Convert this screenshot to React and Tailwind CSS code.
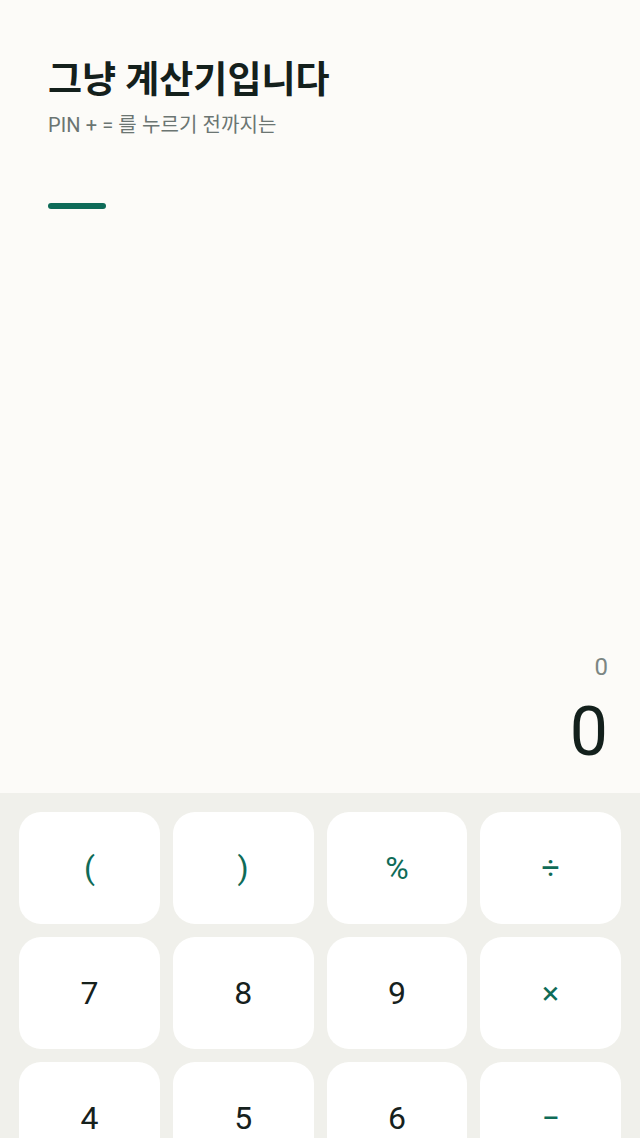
import React, { useState } from "react";

const keys = [
  { label: "(", op: true },
  { label: ")", op: true },
  { label: "%", op: true },
  { label: "÷", op: true },
  { label: "7" },
  { label: "8" },
  { label: "9" },
  { label: "×", op: true },
  { label: "4" },
  { label: "5" },
  { label: "6" },
  { label: "−", op: true },
  { label: "1" },
  { label: "2" },
  { label: "3" },
  { label: "+", op: true },
  { label: "C", op: true },
  { label: "0" },
  { label: "." },
  { label: "=", op: true },
];

export default function App() {
  const [expr, setExpr] = useState("0");
  const [result, setResult] = useState("0");

  const press = (k) => {
    if (k === "C") {
      setExpr("0");
      setResult("0");
      return;
    }
    setExpr((e) => (e === "0" ? k : e + k));
  };

  return (
    <div
      className="h-screen overflow-hidden bg-[#fcfbf8] flex flex-col"
      style={{ fontFamily: 'Roboto, "Noto Sans CJK KR", sans-serif' }}
    >
      <div className="h-[793px] shrink-0 flex flex-col px-12 pr-8">
        <h1 className="mt-[55px] text-[37px] leading-[52px] font-bold text-[#14201c]">
          그냥 계산기입니다
        </h1>
        <p className="mt-[4px] text-[20px] leading-[28px] text-[#6b7572] tracking-[0.005em]">
          PIN + = 를 누르기 전까지는
        </p>
        <div className="mt-[64px] w-[58px] h-[6px] rounded-full bg-[#0e6b58]" />

        <div className="flex-1" />
        <div className="text-right text-[24px] leading-[30px] text-[#7b8683]">{expr}</div>
        <div className="mt-[10px] mb-[21px] text-right text-[68px] leading-[80px] text-[#13201c]">
          {result}
        </div>
      </div>

      <div className="bg-[#f0f0eb] px-[19px] pt-[19px] grid grid-cols-4 gap-x-[13px] gap-y-[13px]">
        {keys.map((k) => (
          <button
            key={k.label}
            onClick={() => press(k.label)}
            className={
              "h-[112px] rounded-[22px] bg-white flex items-center justify-center text-[32px] " +
              (k.op ? "text-[#0f6b57]" : "text-[#16211d]")
            }
          >
            {k.label}
          </button>
        ))}
      </div>
    </div>
  );
}
